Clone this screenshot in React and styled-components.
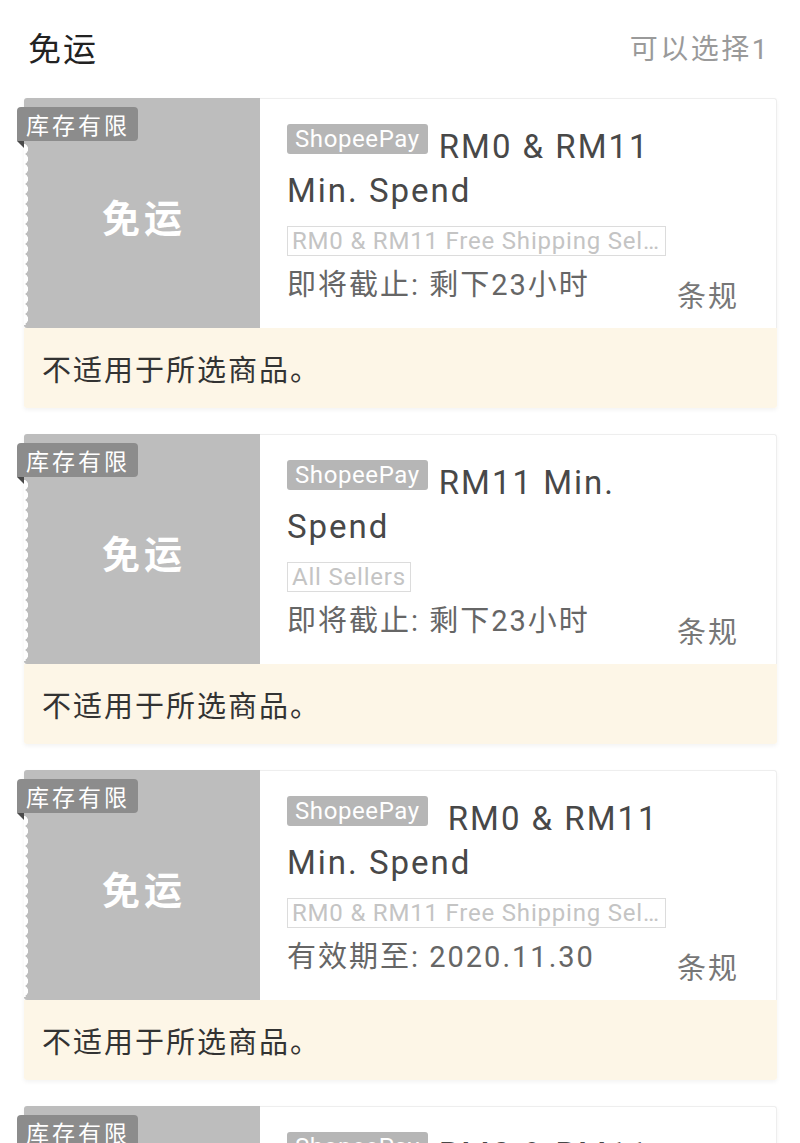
import React from "react";
import styled, { createGlobalStyle } from "styled-components";

const Global = createGlobalStyle`
  html, body { margin: 0; padding: 0; background: #fff; }
  body { font-family: Roboto, "Noto Sans CJK SC", sans-serif; overflow: hidden; }
  * { box-sizing: border-box; }
`;

const Page = styled.div`
  padding: 0 23px 0 24px;
`;

const Header = styled.div`
  height: 98px;
  padding: 0 7px 4px 4px;
  display: flex;
  align-items: center;
  justify-content: space-between;
`;

const HeaderTitle = styled.div`
  font-family: "Noto Sans CJK SC", sans-serif;
  font-size: 33px;
  color: #222;
  letter-spacing: 2px;
`;

const HeaderHint = styled.div`
  font-family: Roboto, "Noto Sans CJK SC", sans-serif;
  font-size: 28px;
  color: #9a9a9a;
  letter-spacing: 2.5px;
`;

const List = styled.div`
  display: flex;
  flex-direction: column;
  gap: 26px;
`;

const Card = styled.div`
  display: flex;
  flex-direction: column;
  box-shadow: 0 2px 4px rgba(0, 0, 0, 0.05);
  border-radius: 3px;
`;

const Main = styled.div`
  display: flex;
  height: 230px;
`;

const Stub = styled.div`
  position: relative;
  width: 236px;
  flex: none;
  background: #bdbdbd;
  border-radius: 3px 0 0 3px;
  display: flex;
  align-items: center;
  justify-content: center;
  &::before {
    content: "";
    position: absolute;
    left: 0;
    top: 46px;
    bottom: 3px;
    width: 7px;
    background: radial-gradient(circle at -1.5px 5px, #fff 5.2px, transparent 5.9px) 0 0 / 7px 10px repeat-y;
  }
`;

const StubLabel = styled.div`
  font-family: "Noto Sans CJK SC", sans-serif;
  font-weight: 700;
  font-size: 38px;
  color: #fff;
  letter-spacing: 4px;
  margin: 4px 0 0 4px;
`;

const Badge = styled.div`
  position: absolute;
  left: -7px;
  top: 9px;
  height: 34px;
  padding: 0 8px 0 9px;
  background: #8c8c8c;
  color: #fff;
  border-radius: 4px 4px 4px 0;
  font-family: "Noto Sans CJK SC", sans-serif;
  font-size: 23px;
  line-height: 34px;
  letter-spacing: 3px;
  &::after {
    content: "";
    position: absolute;
    left: 0;
    top: 34px;
    width: 0;
    height: 0;
    border-top: 7px solid #4a4a4a;
    border-left: 7px solid transparent;
  }
`;

const Body = styled.div`
  flex: 1;
  min-width: 0;
  background: #fff;
  border: 1px solid #eeeeee;
  border-left: none;
  border-bottom: none;
  border-radius: 0 3px 0 0;
  padding: 26px 37px 26px 27px;
  display: flex;
  gap: 11px;
`;

const Info = styled.div`
  flex: 1;
  min-width: 0;
  display: flex;
  flex-direction: column;
  align-items: flex-start;
`;

const Title = styled.div`
  font-family: Roboto, "Noto Sans CJK SC", sans-serif;
  font-size: 33px;
  line-height: 44px;
  color: #484848;
  letter-spacing: 2px;
`;

const PayTag = styled.span`
  display: inline-block;
  vertical-align: top;
  margin-top: -1px;
  margin-right: ${(p) => (p.$gap ? 20 : 11)}px;
  height: 30px;
  padding: 0 8px;
  background: #b6b6b6;
  color: #fff;
  border-radius: 3px;
  font-family: Roboto, sans-serif;
  font-size: 24px;
  line-height: 31px;
  letter-spacing: 0.6px;
`;

const Scope = styled.div`
  margin-top: 13px;
  max-width: 100%;
  height: 30px;
  padding: 0 4px;
  border: 1px solid #dcdcdc;
  color: #c4c4c4;
  font-family: Roboto, sans-serif;
  font-size: 24px;
  line-height: 28px;
  letter-spacing: 0.8px;
  white-space: nowrap;
  overflow: hidden;
  text-overflow: ellipsis;
`;

const Expiry = styled.div`
  margin-top: 13px;
  font-family: Roboto, "Noto Sans CJK SC", sans-serif;
  font-size: 29px;
  line-height: 32px;
  color: #666;
  letter-spacing: 2px;
  white-space: nowrap;
`;

const Terms = styled.div`
  align-self: flex-end;
  margin-bottom: -8px;
  width: 62px;
  flex: none;
  font-family: "Noto Sans CJK SC", sans-serif;
  font-size: 29px;
  line-height: 32px;
  color: #777;
  letter-spacing: 2px;
  white-space: nowrap;
`;

const Notice = styled.div`
  height: 80px;
  background: #fdf6e7;
  padding: 0 18px;
  display: flex;
  align-items: center;
  font-family: "Noto Sans CJK SC", sans-serif;
  font-size: 29px;
  color: #333;
  letter-spacing: 2px;
  border-radius: 0 0 3px 3px;
`;

const vouchers = [
  { title: "RM0 & RM11 Min. Spend", scope: "RM0 & RM11 Free Shipping Seller Vouchers", expiry: "即将截止: 剩下23小时" },
  { title: "RM11 Min. Spend", scope: "All Sellers", expiry: "即将截止: 剩下23小时" },
  { title: "RM0 & RM11 Min. Spend", scope: "RM0 & RM11 Free Shipping Seller Vouchers", expiry: "有效期至: 2020.11.30", gap: true },
  { title: "RM0 & RM11 Min. Spend", scope: "RM0 & RM11 Free Shipping Seller Vouchers", expiry: "有效期至: 2020.11.30" },
];

export default function App() {
  return (
    <>
      <Global />
      <Page>
        <Header>
          <HeaderTitle>免运</HeaderTitle>
          <HeaderHint>可以选择1</HeaderHint>
        </Header>
        <List>
          {vouchers.map((v, i) => (
            <Card key={i}>
              <Main>
                <Stub>
                  <Badge>库存有限</Badge>
                  <StubLabel>免运</StubLabel>
                </Stub>
                <Body>
                  <Info>
                    <Title>
                      <PayTag $gap={v.gap}>ShopeePay</PayTag>
                      {v.title}
                    </Title>
                    <Scope>{v.scope}</Scope>
                    <Expiry>{v.expiry}</Expiry>
                  </Info>
                  <Terms>条规</Terms>
                </Body>
              </Main>
              <Notice>不适用于所选商品。</Notice>
            </Card>
          ))}
        </List>
      </Page>
    </>
  );
}
